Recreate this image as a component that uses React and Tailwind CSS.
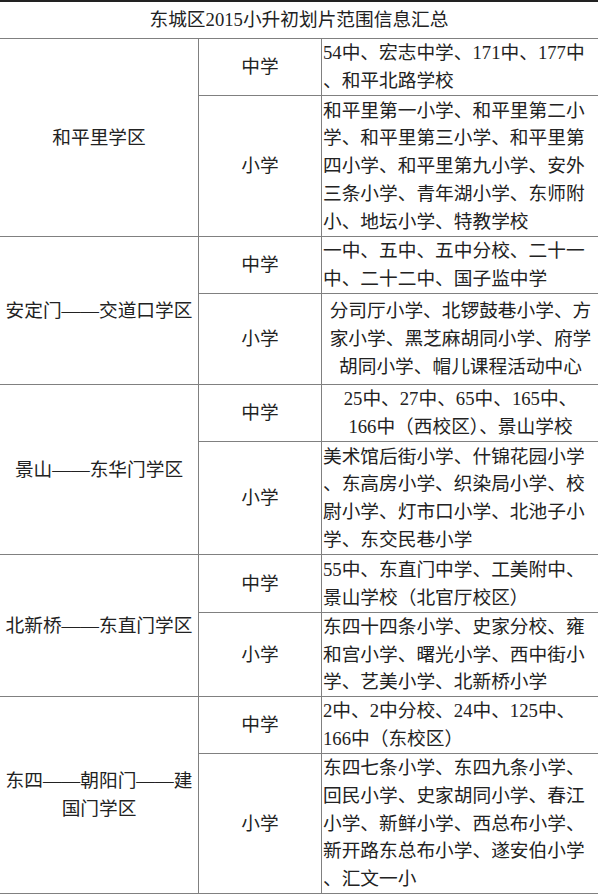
import React from "react";

// 东城区2015小升初划片范围 — plain bordered table, three columns
// heights are fixed per row so the grid lines land where the source has them

const districts = [
  {
    name: ["和平里学区"],
    rows: [
      { type: "中学", h: "h-[57px]", lines: ["54中、宏志中学、171中、177中", "、和平北路学校"] },
      {
        type: "小学",
        h: "h-[141px]",
        lines: [
          "和平里第一小学、和平里第二小",
          "学、和平里第三小学、和平里第",
          "四小学、和平里第九小学、安外",
          "三条小学、青年湖小学、东师附",
          "小、地坛小学、特教学校",
        ],
      },
    ],
  },
  {
    name: ["安定门——交道口学区"],
    rows: [
      { type: "中学", h: "h-[57px]", lines: ["一中、五中、五中分校、二十一", "中、二十二中、国子监中学"] },
      {
        type: "小学",
        h: "h-[91px]",
        center: true,
        lines: ["分司厅小学、北锣鼓巷小学、方", "家小学、黑芝麻胡同小学、府学", "胡同小学、帽儿课程活动中心"],
      },
    ],
  },
  {
    name: ["景山——东华门学区"],
    rows: [
      {
        type: "中学",
        h: "h-[57px]",
        center: true,
        lines: ["25中、27中、65中、165中、", "166中（西校区）、景山学校"],
      },
      {
        type: "小学",
        h: "h-[113px]",
        lines: [
          "美术馆后街小学、什锦花园小学",
          "、东高房小学、织染局小学、校",
          "尉小学、灯市口小学、北池子小",
          "学、东交民巷小学",
        ],
      },
    ],
  },
  {
    name: ["北新桥——东直门学区"],
    rows: [
      { type: "中学", h: "h-[58px]", lines: ["55中、东直门中学、工美附中、", "景山学校（北官厅校区）"] },
      {
        type: "小学",
        h: "h-[84px]",
        lines: ["东四十四条小学、史家分校、雍", "和宫小学、曙光小学、西中街小", "学、艺美小学、北新桥小学"],
      },
    ],
  },
  {
    name: ["东四——朝阳门——建", "国门学区"],
    rows: [
      { type: "中学", h: "h-[57px]", lines: ["2中、2中分校、24中、125中、", "166中（东校区）"] },
      {
        type: "小学",
        h: "h-[140px]",
        lines: [
          "东四七条小学、东四九条小学、",
          "回民小学、史家胡同小学、春江",
          "小学、新鲜小学、西总布小学、",
          "新开路东总布小学、遂安伯小学",
          "、汇文一小",
        ],
      },
    ],
  },
];

export default function App() {
  return (
    <div className="min-h-screen bg-white text-[#222] text-[18.7px] leading-[27.7px] font-['Liberation_Serif','Noto_Sans_CJK_SC',serif]">
      <div className="w-[598px]">
        <div className="h-[39px] border-t-2 border-b border-t-[#222] border-b-[#808080] flex items-center justify-center">
          东城区2015小升初划片范围信息汇总
        </div>
        {districts.map((d, i) => (
          <District key={i} d={d} />
        ))}
      </div>
    </div>
  );
}

function District({ d }) {
  return (
    <div className="flex">
      <div className="w-[199px] shrink-0 border-r border-b border-[#808080] flex flex-col items-center justify-center text-center">
        {d.name.map((n, i) => (
          <div key={i} className="whitespace-nowrap">
            {n}
          </div>
        ))}
      </div>
      <div className="flex-1 flex flex-col">
        {d.rows.map((r, i) => (
          <div key={i} className={"flex border-b border-[#808080] " + r.h}>
            <div className="w-[123px] shrink-0 border-r border-[#808080] flex items-center justify-center">
              {r.type}
            </div>
            <div
              className={
                "flex-1 flex flex-col justify-center pl-[1px] " + (r.center ? "items-center" : "items-start")
              }
            >
              {r.lines.map((l, j) => (
                <div key={j} className="whitespace-nowrap">
                  {l}
                </div>
              ))}
            </div>
          </div>
        ))}
      </div>
    </div>
  );
}
